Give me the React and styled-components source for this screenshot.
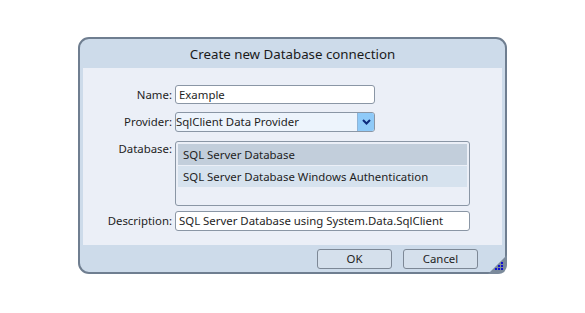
import React from "react";
import styled, { createGlobalStyle } from "styled-components";

const Global = createGlobalStyle`
  html, body { margin: 0; padding: 0; background: #ffffff; }
  body { font-family: "Noto Sans", "Open Sans", sans-serif; color: #1e1e1e; }
`;

const Page = styled.div`
  width: 585px;
  height: 313px;
  padding: 37px 0 0 78px;
  box-sizing: border-box;
`;

const Dialog = styled.div`
  position: relative;
  width: 429px;
  height: 237px;
  box-sizing: border-box;
  border: 2px solid #6f7e90;
  border-radius: 11px;
  background: #cddbea;
  display: flex;
  flex-direction: column;
`;

const Title = styled.div`
  height: 29px;
  display: flex;
  align-items: center;
  justify-content: center;
  font-size: 13.3px;
  color: #1a1a1a;
  padding-top: 1px;
  box-sizing: border-box;
`;

const Body = styled.div`
  height: 177px;
  margin: 0 3px;
  background: #ebeff7;
  padding: 17px 0 0 0;
  box-sizing: border-box;
  display: grid;
  grid-template-columns: 89px 1fr;
  column-gap: 3px;
  align-content: start;
`;

const Label = styled.div`
  font-size: 11.4px;
  text-align: right;
  height: ${(p) => p.$h}px;
  line-height: ${(p) => (p.$top ? 16 : p.$h)}px;
  margin-top: ${(p) => p.$mt || 0}px;
  white-space: nowrap;
`;

const Field = styled.div`
  margin-top: ${(p) => p.$mt || 0}px;
  display: flex;
`;

const TextBox = styled.div`
  width: ${(p) => p.$w}px;
  height: ${(p) => p.$h}px;
  box-sizing: border-box;
  border: 1px solid #8a96a5;
  border-radius: 3px;
  background: #ffffff;
  font-size: 11.4px;
  line-height: ${(p) => p.$h - 2}px;
  padding-left: 3px;
  white-space: nowrap;
`;

const Select = styled.div`
  width: 200px;
  height: 20px;
  box-sizing: border-box;
  border: 1px solid #8a96a5;
  border-radius: 3px;
  background: #edf4fc;
  display: flex;
  align-items: center;
  font-size: 11.4px;
`;

const SelectText = styled.span`
  flex: 1;
  line-height: 18px;
  white-space: nowrap;
`;

const DropButton = styled.div`
  width: 17px;
  height: 18px;
  box-sizing: border-box;
  border-left: 1px solid #8fb4d6;
  border-radius: 0 2px 2px 0;
  background: #8fcaf8;
  display: flex;
  align-items: center;
  justify-content: center;
`;

const List = styled.div`
  width: 295px;
  height: 65px;
  box-sizing: border-box;
  border: 1px solid #8a96a5;
  border-radius: 3px;
  background: #ebeff7;
  padding: 2px 2px 0 2px;
  display: flex;
  flex-direction: column;
  gap: 1px;
`;

const ListItem = styled.div`
  height: 21px;
  background: ${(p) => (p.$selected ? "#c2cedb" : "#d6e2ee")};
  font-size: 11.4px;
  line-height: 21px;
  padding-left: 5px;
  white-space: nowrap;
`;

const Footer = styled.div`
  flex: 1;
  display: flex;
  justify-content: flex-end;
  align-items: flex-start;
  gap: 11px;
  padding: 4px 27px 0 0;
`;

const Button = styled.div`
  width: 75px;
  height: 20px;
  box-sizing: border-box;
  border: 1px solid #7d8896;
  border-radius: 3px;
  background: #d5e0ec;
  font-size: 11.4px;
  line-height: 18px;
  text-align: center;
`;

const Grip = styled.svg`
  position: absolute;
  right: -2px;
  bottom: -2px;
`;

export default function App() {
  return (
    <>
      <Global />
      <Page>
        <Dialog>
          <Title>Create new Database connection</Title>
          <Body>
            <Label $h={19}>Name:</Label>
            <Field>
              <TextBox $w={200} $h={19}>Example</TextBox>
            </Field>

            <Label $h={20} $mt={8}>Provider:</Label>
            <Field $mt={8}>
              <Select>
                <SelectText>SqlClient Data Provider</SelectText>
                <DropButton>
                  <svg width="9" height="6" viewBox="0 0 9 6">
                    <path d="M1 1 L4.5 4.5 L8 1" fill="none" stroke="#0c2a7c" strokeWidth="2" />
                  </svg>
                </DropButton>
              </Select>
            </Field>

            <Label $h={65} $mt={9} $top>Database:</Label>
            <Field $mt={9}>
              <List>
                <ListItem $selected>SQL Server Database</ListItem>
                <ListItem>SQL Server Database Windows Authentication</ListItem>
              </List>
            </Field>

            <Label $h={20} $mt={5}>Description:</Label>
            <Field $mt={5}>
              <TextBox $w={295} $h={20}>SQL Server Database using System.Data.SqlClient</TextBox>
            </Field>
          </Body>
          <Footer>
            <Button>OK</Button>
            <Button>Cancel</Button>
          </Footer>
          <Grip width="22" height="22" viewBox="0 0 22 22">
            <path d="M22 3 L22 12 Q22 22 12 22 L3 22 Z" fill="#7b8a9b" />
            <rect x="10" y="16" width="2" height="2" fill="#1010d0" />
            <rect x="13" y="16" width="2" height="2" fill="#1010d0" />
            <rect x="16" y="16" width="2" height="2" fill="#1010d0" />
            <rect x="13" y="13" width="2" height="2" fill="#1010d0" />
            <rect x="16" y="13" width="2" height="2" fill="#1010d0" />
            <rect x="16" y="10" width="2" height="2" fill="#1010d0" />
          </Grip>
        </Dialog>
      </Page>
    </>
  );
}
